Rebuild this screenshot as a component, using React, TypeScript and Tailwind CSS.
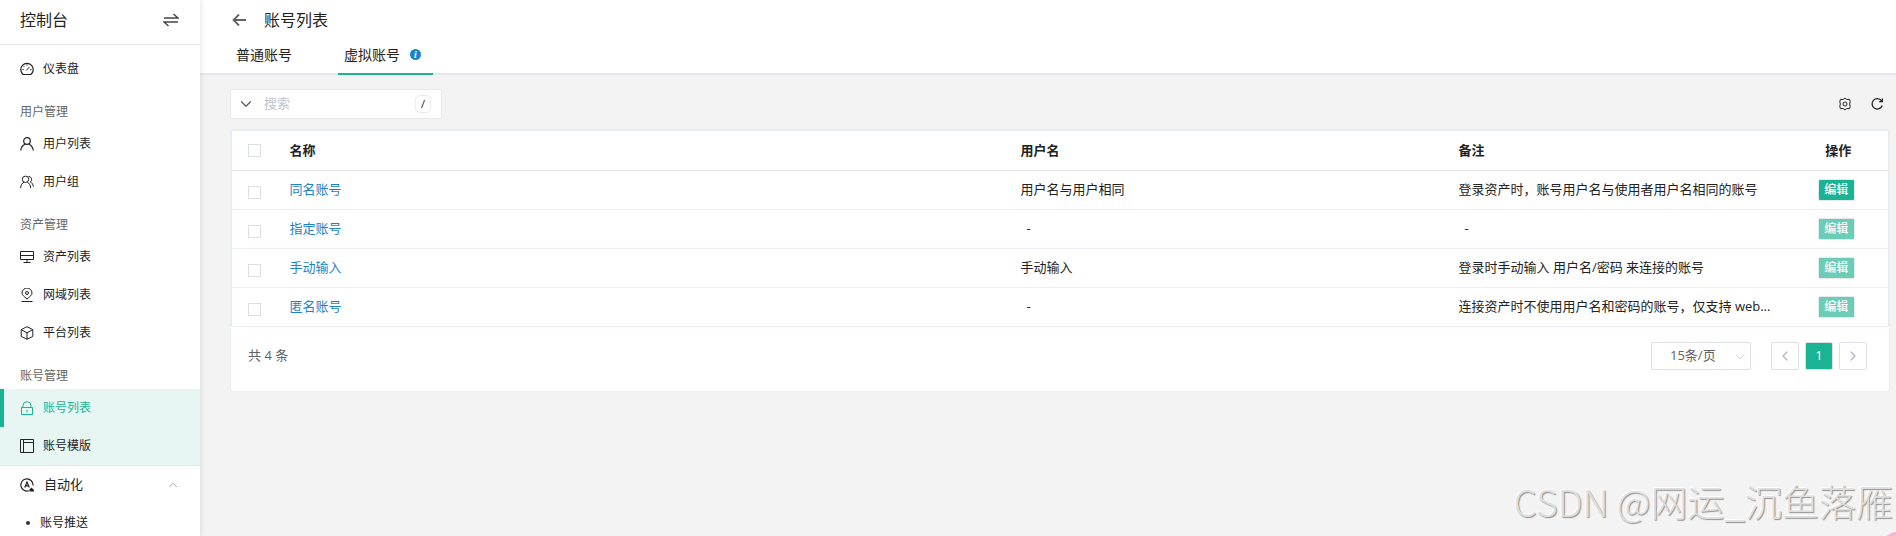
import { ReactNode } from "react"
import { ChevronDown, ChevronLeft, ChevronRight, ChevronUp } from "lucide-react"

type Item = { label: string; icon: ReactNode; active?: boolean; tinted?: boolean }
type Group = { title?: string; items: Item[] }
type Account = { name: string; username?: string; comment?: string; editable?: boolean }

function Icon({ children, size = 14 }: { children: ReactNode; size?: number }) {
  return (
    <svg width={size} height={size} viewBox="0 0 14 14" fill="none" stroke="currentColor" strokeWidth="1" className="shrink-0" aria-hidden="true">
      {children}
    </svg>
  )
}

const groups: Group[] = [
  {
    items: [
      { label: "仪表盘", icon: <Icon><path d="M3.2 12.5a6.2 6.2 0 1 1 7.6 0z" strokeWidth="1.200" /><path d="M6.4 8.400 9.400 5M7 2.500v1.200M2.500 7.500h1.200M10.300 7.500h1.200M3.700 4.200l.8.8" /></Icon> },
    ],
  },
  {
    title: "用户管理",
    items: [
      { label: "用户列表", icon: <Icon><circle cx="7" cy="4" r="3.300" strokeWidth="1.200" /><path d="M.7 13.500c.4-3.300 2-5.200 4.300-6.200M13.300 13.500c-.4-3.300-2-5.200-4.300-6.200" strokeWidth="1.200" /></Icon> },
      { label: "用户组", icon: <Icon><circle cx="5.500" cy="4.300" r="3.200" /><path d="M.6 13c.3-3 1.500-4.900 3.400-5.800M10.700 13c-.3-3-1.500-4.900-3.400-5.800M8.500 1.500a3 3 0 0 1 1.800 5.500c1.800.8 2.800 2.200 3.100 4.700" /></Icon> },
    ],
  },
  {
    title: "资产管理",
    items: [
      { label: "资产列表", icon: <Icon><path d="M.5 1.500h13v8H.5zM.5 5.500h13M7 9.500v3M3.500 12.500h7" /></Icon> },
      { label: "网域列表", icon: <Icon><path d="M7 11C4 8.500 2 7 2 5a5 5 0 0 1 10 0c0 2-2 3.500-5 6zM1.500 13.500h11" /><circle cx="7" cy="5" r="1.500" /></Icon> },
      { label: "平台列表", icon: <Icon><path d="M7 .7 12.800 3.600v6.800L7 13.300 1.200 10.400V3.600zM1.200 3.600 7 6.800l5.800-3.200M7 6.800v6.500" /></Icon> },
    ],
  },
  {
    title: "账号管理",
    items: [
      { label: "账号列表", active: true, tinted: true, icon: <Icon><path d="M1.500 6.500h11v7h-11zM3 6.500V4.700a4 4 0 0 1 8 0v1.800M7 8.800v2.700" /></Icon> },
      { label: "账号模版", tinted: true, icon: <Icon><path d="M.5.5h13v13H.5zM3.500.5v13M3.500 3.500h10" /></Icon> },
    ],
  },
]

const accounts: Account[] = [
  { name: "同名账号", username: "用户名与用户相同", comment: "登录资产时，账号用户名与使用者用户名相同的账号", editable: true },
  { name: "指定账号" },
  { name: "手动输入", username: "手动输入", comment: "登录时手动输入 用户名/密码 来连接的账号" },
  { name: "匿名账号", comment: "连接资产时不使用用户名和密码的账号，仅支持 web..." },
]

function Sidebar() {
  return (
    <aside className="z-10 flex w-[200px] shrink-0 flex-col overflow-hidden bg-white shadow-[1px_0_6px_rgba(0,0,0,0.1)]">
      <div className="flex h-[45px] shrink-0 items-center justify-between border-b border-[#e7e7e7] pr-[21px] pb-1 pl-5">
        <h2 className="text-base">控制台</h2>
        <button aria-label="切换">
          <svg width="16" height="14" viewBox="0 0 16 14" fill="none" stroke="#444" strokeWidth="1.400">
            <path d="M1 5h14L10.500 1M15 9H1l4.500 4" />
          </svg>
        </button>
      </div>
      <nav className="pt-[5px] text-xs">
        {groups.map((g, i) => (
          <div key={i}>
            {g.title && <div className="h-[37px] pt-2.5 pl-5 leading-[27px] text-[#666]">{g.title}</div>}
            {g.items.map(item => (
              <a
                key={item.label}
                href="#"
                className={`flex h-[38px] items-center gap-[9px] border-l-4 pl-4 ${item.tinted ? "bg-[#e8f6f3]" : ""} ${item.active ? "border-[#1ab394] text-[#1ab394]" : item.tinted ? "border-[#e8f6f3]" : "border-transparent"}`}
              >
                {item.icon}
                {item.label}
              </a>
            ))}
          </div>
        ))}
        <button className="flex h-[39px] w-full items-center gap-[10px] border-t border-[#e2e8e6] pr-5 pl-5 text-[13px]">
          <Icon>
            <path d="M9 12.700A6.100 6.100 0 1 1 13 7.500" strokeWidth="1.200" />
            <path d="M4.700 9.500 7 4l2.300 5.500M5.500 7.800h3" strokeWidth="1.200" />
            <path d="M9.500 13.500v-2l2-2 2.500 2.500v1.500z" fill="currentColor" stroke="none" />
          </Icon>
          自动化
          <ChevronUp size={14} strokeWidth={1.500} className="ml-auto text-[#999]" />
        </button>
        <a href="#" className="flex h-[38px] items-center gap-[10px] pl-[26px]">
          <span className="size-1 rounded-full bg-[#333]" />
          账号推送
        </a>
      </nav>
    </aside>
  )
}

function Header() {
  return (
    <header className="border-b-2 border-[#e4e7ed] bg-white">
      <div className="flex h-10 items-center gap-[18px] pl-8">
        <button aria-label="返回">
          <Icon>
            <path d="M14 7H1.500M7 1.500 1.500 7 7 12.500" stroke="#606266" strokeWidth="1.800" />
          </Icon>
        </button>
        <h1 className="text-base">账号列表</h1>
      </div>
      <div role="tablist" className="-mb-0.5 flex h-[35px] gap-10 pl-[30px] text-sm">
        <button role="tab" aria-selected="false" className="px-1.5 pb-1.5">普通账号</button>
        <button role="tab" aria-selected="true" className="flex items-center gap-2.5 border-b-2 border-[#1ab394] pr-3 pb-1 pl-1.5">
          虚拟账号
          <span className="flex size-[11px] items-center justify-center rounded-full bg-[#1c84c6] font-['Liberation_Serif',serif] text-[10px] leading-none font-bold text-white italic">i</span>
        </button>
      </div>
    </header>
  )
}

function Toolbar() {
  return (
    <div className="flex items-center justify-between">
      <div className="flex h-[30px] w-[212px] items-center border border-[#e7e8ea] bg-white pr-2.5 pl-1.5">
        <ChevronDown size={18} strokeWidth={1.500} className="text-[#555]" />
        <input aria-label="搜索" placeholder="搜索" className="min-w-0 flex-1 pl-[9px] text-[13px] outline-none placeholder:text-[#c0c4cc]" />
        <kbd className="flex h-[18px] w-4 items-center justify-center rounded-[5px] border border-[#ececec] font-[inherit] text-[11px]">/</kbd>
      </div>
      <div className="flex gap-[18px] pr-1.5">
        <button aria-label="设置">
          <Icon>
            <path d="M7 1 8.800 2.500l2.800-.2.600 2.600-.6 2.100.6 2.100-.6 2.600-2.800-.2L7 13l-1.800-1.500-2.800.2-.6-2.600.6-2.100-.6-2.100.6-2.600 2.800.2z" />
            <circle cx="7" cy="7" r="2" />
          </Icon>
        </button>
        <button aria-label="刷新">
          <Icon>
            <path d="M11.500 3.800a5.200 5.200 0 1 0 .7 4.700M12.300 1.500v3.200H9.200" strokeWidth="1.300" />
          </Icon>
        </button>
      </div>
    </div>
  )
}

function AccountTable() {
  return (
    <table className="w-full table-fixed border-x border-t-2 border-[#e8edf2] text-[13px]">
      <colgroup>
        <col className="w-12" />
        <col />
        <col className="w-[438px]" />
        <col className="w-[338px]" />
        <col className="w-[102px]" />
      </colgroup>
      <thead>
        <tr className="h-10 border-b border-[#e7e7e7] text-left">
          <th className="pl-4">
            <input type="checkbox" aria-label="全选" className="block size-[13px] appearance-none border border-[#dcdfe6] bg-white" />
          </th>
          <th className="px-2.5">名称</th>
          <th className="px-2.5">用户名</th>
          <th className="px-2.5">备注</th>
          <th className="pl-0.5 text-center">操作</th>
        </tr>
      </thead>
      <tbody>
        {accounts.map(a => (
          <tr key={a.name} className="h-[39px] border-b border-[#ebeef5]">
            <td className="pt-1.5 pl-4">
              <input type="checkbox" aria-label={a.name} className="block size-[13px] appearance-none border border-[#dcdfe6] bg-white" />
            </td>
            <td className="px-2.5"><a href="#" className="text-[#1c84c6]">{a.name}</a></td>
            <td className="truncate px-2.5">{a.username ?? <span className="pl-1.5">-</span>}</td>
            <td className="truncate px-2.5">{a.comment ?? <span className="pl-1.5">-</span>}</td>
            <td className="pr-0.5 text-center">
              <button
                disabled={!a.editable}
                className={`h-[22px] w-[37px] rounded-xs border border-[#e4e9ea] align-middle text-xs leading-5 font-medium text-white ${a.editable ? "bg-[#1ab394]" : "bg-[#6bccb8]"}`}
              >
                编辑
              </button>
            </td>
          </tr>
        ))}
      </tbody>
    </table>
  )
}

function Pagination() {
  return (
    <div className="flex h-16 items-center pr-[22px] pb-1.5 pl-[17px] text-[13px] text-[#606266]">
      <span className="mr-auto">共 4 条</span>
      <div className="relative mr-5">
        <select aria-label="每页条数" className="h-7 w-[100px] appearance-none rounded-xs border border-[#dcdfe6] bg-white pl-[18px]">
          <option>15条/页</option>
        </select>
        <ChevronDown size={14} strokeWidth={1.500} className="pointer-events-none absolute top-2 right-1 text-[#c0c4cc]" />
      </div>
      <div className="flex gap-1.5">
        <button aria-label="上一页" className="flex size-7 items-center justify-center rounded-xs border border-[#dcdfe6] text-[#b4b8c0]"><ChevronLeft size={16} /></button>
        <button className="size-7 rounded-xs border border-[#dcdfe6] bg-[#1ab394] text-white">1</button>
        <button aria-label="下一页" className="flex size-7 items-center justify-center rounded-xs border border-[#dcdfe6] text-[#b4b8c0]"><ChevronRight size={16} /></button>
      </div>
    </div>
  )
}

export default function App() {
  return (
    <div className="relative flex h-screen overflow-hidden bg-[#f3f3f3] font-['Open_Sans','Noto_Sans_CJK_SC',sans-serif] text-[#222]">
      <Sidebar />
      <main className="min-w-0 flex-1">
        <Header />
        <div className="pt-3.5 pr-1.5 pl-[30px]">
          <Toolbar />
          <section className="mt-2.5 rounded border border-t-0 border-[#ebeef5] bg-white">
            <AccountTable />
            <Pagination />
          </section>
        </div>
      </main>
      <div className="pointer-events-none absolute right-[3px] bottom-2 font-['Noto_Sans_CJK_SC',sans-serif] text-[37px] leading-[54px] font-light text-[#dedede] [text-shadow:1px_1px_1px_#909090,-1px_-1px_0_#fff]">
        CSDN @网运_沉鱼落雁
      </div>
      <div className="absolute -right-3 -bottom-5 size-6 rounded-full bg-[#f8b4d0]" />
    </div>
  )
}
